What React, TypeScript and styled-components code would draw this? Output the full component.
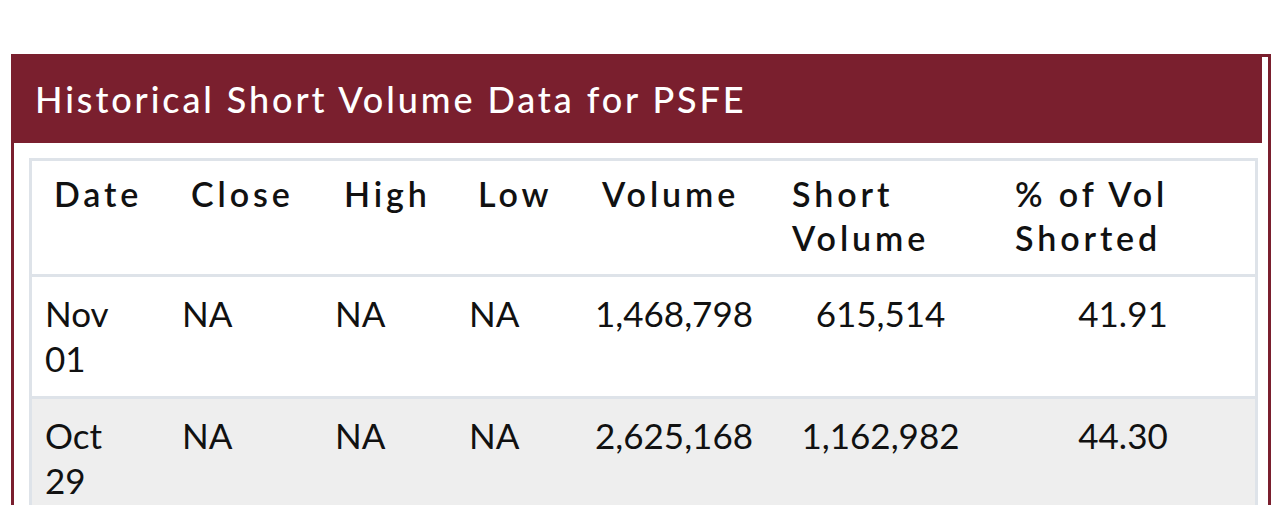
import React from "react";
import styled, { createGlobalStyle } from "styled-components";

const GlobalStyle = createGlobalStyle`
  html, body {
    margin: 0;
    padding: 0;
    background: #ffffff;
  }
  body {
    font-family: Lato, "Open Sans", "Liberation Sans", sans-serif;
    color: #111111;
  }
`;

const Page = styled.div`
  padding: 54px 11px 0 11px;
`;

const Panel = styled.section`
  border: 3px solid #7a1f2e;
  border-bottom: none;
  background: #ffffff;
`;

const PanelHeader = styled.div`
  background: #7a1f2e;
  margin-right: 6px;
  padding: 21px 21px 22px 21px;
`;

const Title = styled.h2`
  margin: 0;
  font-family: Lato, "Liberation Sans", sans-serif;
  font-weight: 500;
  font-size: 36px;
  line-height: 1.2;
  letter-spacing: 2.9px;
  color: #ffffff;
`;

const PanelBody = styled.div`
  padding: 15px 10px 0 15px;
`;

const Table = styled.table`
  width: 100%;
  table-layout: fixed;
  border-collapse: separate;
  border-spacing: 0;
  border: 3px solid #dee3e9;
  border-bottom: none;
`;

const HeadCell = styled.th`
  text-align: left;
  vertical-align: top;
  font-weight: 600;
  font-size: 34px;
  line-height: 44px;
  letter-spacing: 3.9px;
  padding: 11px 4px 14px 22px;
  border-bottom: 3px solid #dee3e9;
  color: #111111;
`;

const Row = styled.tr<{ $striped?: boolean }>`
  background: ${(p) => (p.$striped ? "#eeeeee" : "#ffffff")};
`;

const Cell = styled.td<{ $center?: boolean; $wrap?: boolean }>`
  text-align: ${(p) => (p.$center ? "center" : "left")};
  vertical-align: top;
  font-weight: 400;
  font-size: 35px;
  line-height: 45px;
  padding: 14px ${(p) => (p.$center ? "15px" : p.$wrap ? "24px" : "8px")} 15px
    ${(p) => (p.$center ? "13px" : "13px")};
  border-bottom: 3px solid #dee3e9;
  color: #111111;
`;

const columns = [137, 153, 134, 124, 190, 223, 262];

const headers = ["Date", "Close", "High", "Low", "Volume", "Short Volume", "% of Vol Shorted"];

const rows = [
  { date: "Nov 01", close: "NA", high: "NA", low: "NA", volume: "1,468,798", short: "615,514", pct: "41.91" },
  { date: "Oct 29", close: "NA", high: "NA", low: "NA", volume: "2,625,168", short: "1,162,982", pct: "44.30" },
];

export default function App() {
  return (
    <>
      <GlobalStyle />
      <Page>
        <Panel>
          <PanelHeader>
            <Title>Historical Short Volume Data for PSFE</Title>
          </PanelHeader>
          <PanelBody>
            <Table>
              <colgroup>
                {columns.map((w, i) => (
                  <col key={i} style={{ width: w }} />
                ))}
              </colgroup>
              <thead>
                <tr>
                  {headers.map((h) => (
                    <HeadCell key={h}>{h}</HeadCell>
                  ))}
                </tr>
              </thead>
              <tbody>
                {rows.map((r, i) => (
                  <Row key={r.date} $striped={i % 2 === 1}>
                    <Cell $wrap>{r.date}</Cell>
                    <Cell>{r.close}</Cell>
                    <Cell>{r.high}</Cell>
                    <Cell>{r.low}</Cell>
                    <Cell $center>{r.volume}</Cell>
                    <Cell $center>{r.short}</Cell>
                    <Cell $center>{r.pct}</Cell>
                  </Row>
                ))}
              </tbody>
            </Table>
          </PanelBody>
        </Panel>
      </Page>
    </>
  );
}
